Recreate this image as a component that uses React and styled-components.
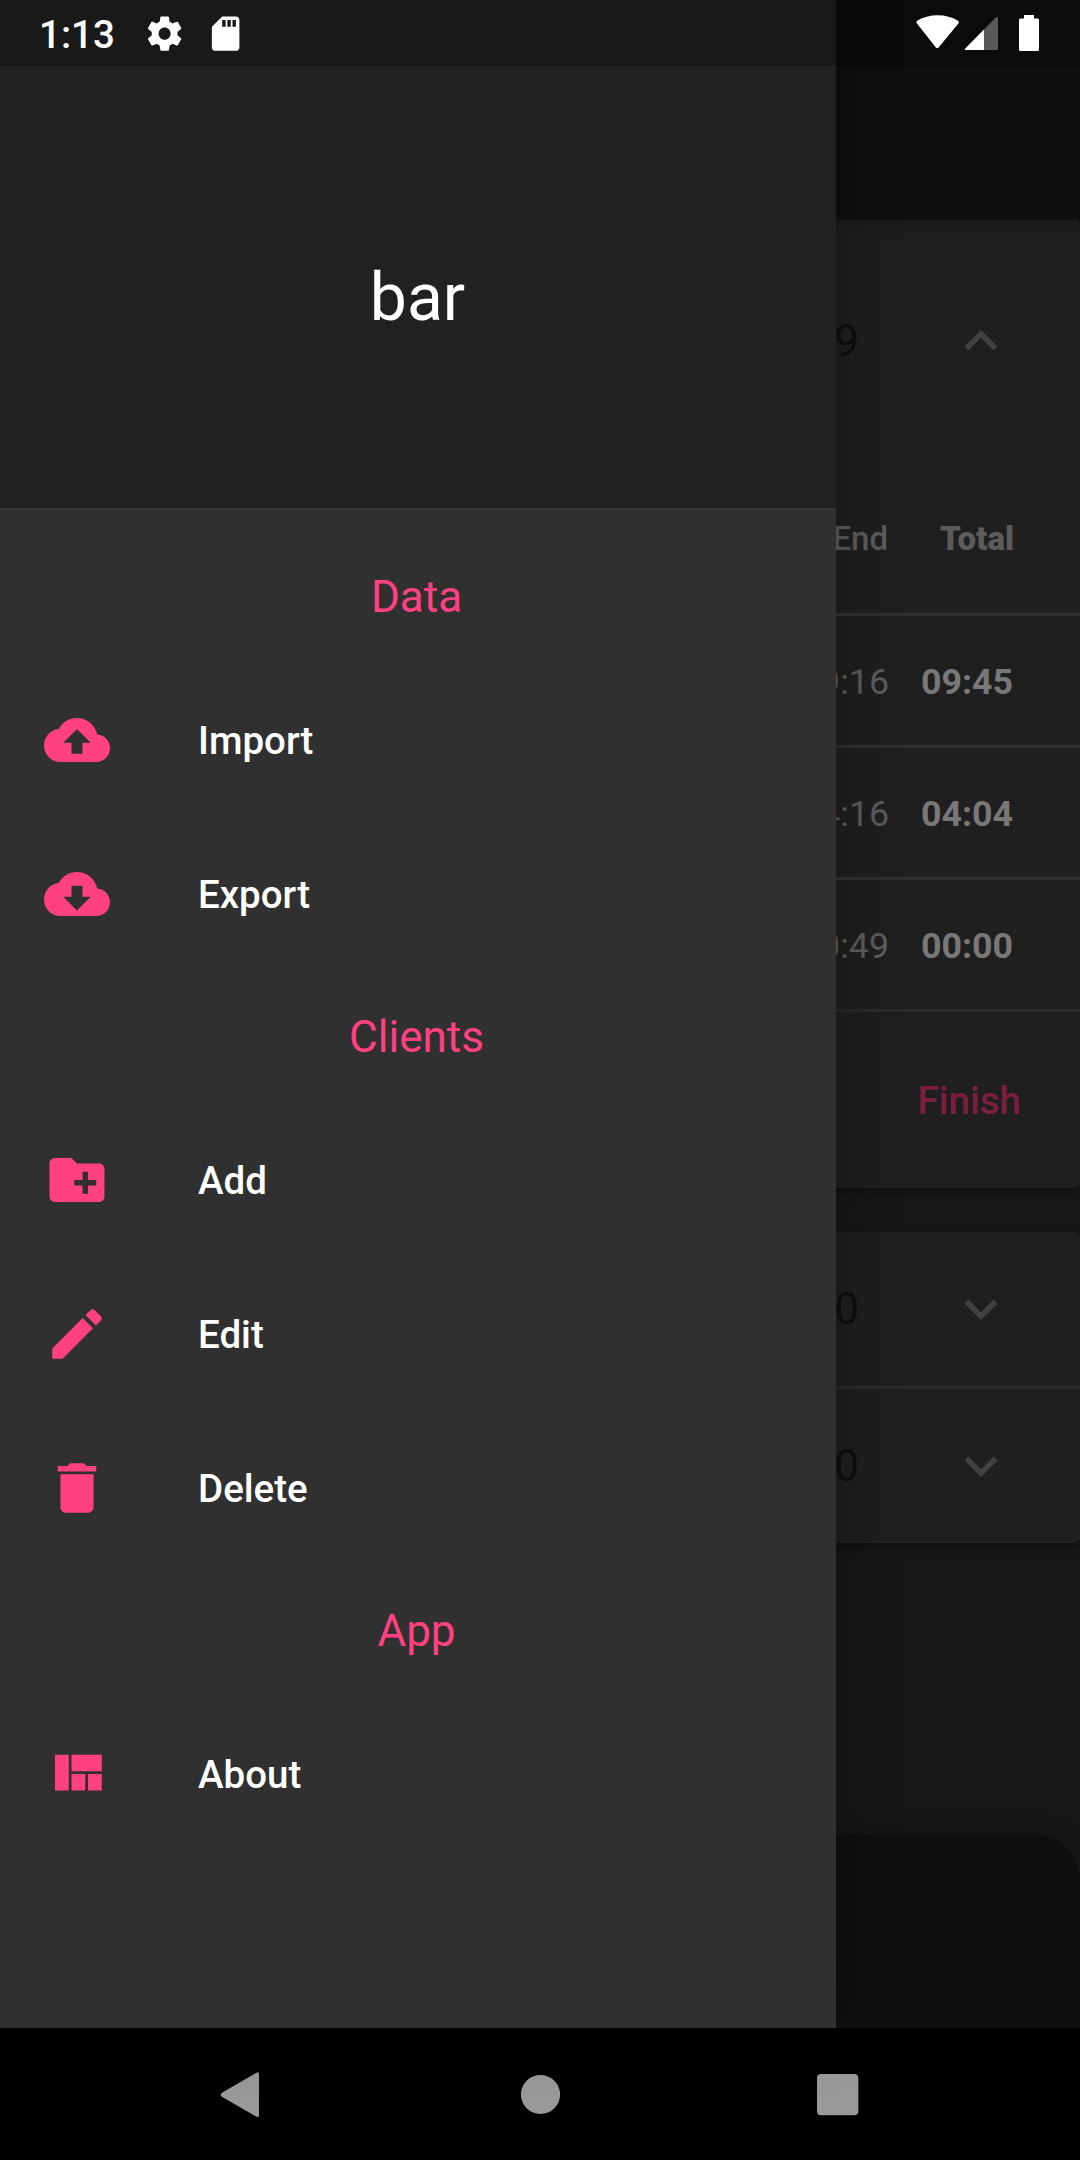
import React from 'react';
import styled, { createGlobalStyle } from 'styled-components';

const GlobalStyle = createGlobalStyle`
  * { box-sizing: border-box; }
  html, body { margin: 0; background: #000; }
  body { font-family: Roboto, "Noto Sans", sans-serif; }
`;

const Screen = styled.div`
  position: relative;
  width: 1080px;
  height: 2160px;
  display: flex;
  flex-direction: column;
  overflow: hidden;
  background: #000;
`;

const Page = styled.main`
  isolation: isolate;
  height: 2028px;
  display: flex;
  flex-direction: column;
  background: #171717;
  overflow: hidden;
`;

const AppBar = styled.header`
  flex: none;
  height: 220px;
  background: #0f0f0f;
  box-shadow: 0 2px 12px rgba(0, 0, 0, 0.2);
  z-index: 1;
`;

const Card = styled.section`
  flex: none;
  display: flex;
  flex-direction: column;
  margin-bottom: 44px;
  background: #1f1f1f;
  border-radius: 6px;
  box-shadow: 0 3px 9px rgba(0, 0, 0, 0.4);
`;

const PanelHeader = styled.div`
  display: flex;
  align-items: center;
  justify-content: flex-end;
  gap: 89px;
  box-sizing: content-box;
  height: ${(p) => (p.$open ? 242 : 154)}px;
  padding-right: 66px;
  border-bottom: ${(p) => (p.$divided ? '3px solid #2a2a2a' : '0')};
  color: #0e0e0e;
  font-size: 44px;
`;

const Row = styled.div`
  display: flex;
  align-items: center;
  justify-content: flex-end;
  height: ${(p) => (p.$head ? 154 : 132)}px;
  padding-top: 2px;
  padding-right: ${(p) => (p.$head ? 66 : 67)}px;
  border-bottom: 3px solid ${(p) => (p.$last ? '#2a2a2a' : '#303030')};
  color: #5c5c5c;
  font-size: ${(p) => (p.$head ? 33 : 35.75)}px;
  font-weight: ${(p) => (p.$head ? 500 : 400)};
`;

const TotalCell = styled.span`
  width: ${(p) => (p.$head ? 126 : 124)}px;
  text-align: right;
  font-weight: ${(p) => (p.$head ? 900 : 700)};
  color: ${(p) => (p.$head ? 'inherit' : '#787878')};
`;

const Actions = styled.div`
  display: flex;
  align-items: center;
  justify-content: flex-end;
  height: 176px;
  padding-right: 59px;
`;

const FinishButton = styled.button`
  border: 0;
  padding: 0;
  background: none;
  color: #7d1e3f;
  font: 500 38.5px Roboto, sans-serif;
`;

const BottomBar = styled.footer`
  flex: none;
  height: 193px;
  margin-top: auto;
  background: #0f0f0f;
  border-radius: 44px 44px 0 0;
  box-shadow: 0 -2px 22px rgba(0, 0, 0, 0.2);
`;

const Drawer = styled.aside`
  position: absolute;
  top: 0;
  left: 0;
  width: 836px;
  height: 2028px;
  display: flex;
  flex-direction: column;
  background: #303030;
  box-shadow: 0 0 60px rgba(0, 0, 0, 0.3);
`;

const DrawerHeader = styled.div`
  flex: none;
  display: flex;
  align-items: center;
  justify-content: center;
  height: 510px;
  margin-bottom: 21px;
  padding: 86px 1px 0 0;
  border-bottom: 2px solid #363636;
  background: #212121;
  color: #fff;
  font-size: 66px;
`;

const Subheader = styled.h2`
  flex: none;
  display: flex;
  align-items: center;
  justify-content: center;
  height: 132px;
  margin: 0;
  padding-right: 3px;
  color: #ff4081;
  font-size: 44px;
  font-weight: 400;
`;

const Tile = styled.div`
  flex: none;
  display: flex;
  align-items: center;
  gap: 88px;
  height: 154px;
  padding-left: 44px;
  color: #fff;
  font-size: 38.5px;
  font-weight: 500;
`;

const Glyph = styled.svg`
  flex: none;
  width: ${(p) => p.$size || 66}px;
  height: ${(p) => p.$size || 66}px;
  fill: ${(p) => p.$color || '#ff4081'};
`;

const StatusBar = styled.div`
  position: absolute;
  top: 0;
  left: 0;
  right: 0;
  display: flex;
  align-items: center;
  height: 66px;
  padding: 0 41px 0 39px;
  background: rgba(0, 0, 0, 0.22);
  color: #fff;
`;

const Clock = styled.time`
  width: 105px;
  padding-top: 2px;
  font-size: 38.5px;
  font-weight: 500;
`;

const Notifications = styled.div`
  display: flex;
  align-items: center;
  gap: 20px;
  padding-top: 1px;
`;

const SystemIcons = styled.svg`
  width: 124px;
  height: 38px;
  margin-left: auto;
`;

const NavBar = styled.nav`
  display: grid;
  grid-template-columns: repeat(3, 1fr);
  justify-items: center;
  align-items: center;
  height: 132px;
  padding: 0 93px;
`;

const NavIcon = styled.svg`
  width: 46px;
  height: 46px;
  fill: #999;
`;

const PATHS = {
  upload: 'M19.35 10.04C18.67 6.59 15.64 4 12 4 9.11 4 6.6 5.64 5.35 8.04 2.34 8.36 0 10.91 0 14c0 3.31 2.69 6 6 6h13c2.76 0 5-2.24 5-5 0-2.64-2.05-4.78-4.65-4.96zM14 13v4h-4v-4H7l5-5 5 5h-3z',
  download: 'M19.35 10.04C18.67 6.59 15.64 4 12 4 9.11 4 6.6 5.64 5.35 8.04 2.34 8.36 0 10.91 0 14c0 3.31 2.69 6 6 6h13c2.76 0 5-2.24 5-5 0-2.64-2.05-4.78-4.65-4.96zM17 13l-5 5-5-5h3V9h4v4h3z',
  folder: 'M20 6h-8l-2-2H4c-1.11 0-1.99.89-1.99 2L2 18c0 1.11.89 2 2 2h16c1.11 0 2-.89 2-2V8c0-1.11-.89-2-2-2zm-1 8h-3v3h-2v-3h-3v-2h3V9h2v3h3v2z',
  edit: 'M3 17.25V21h3.75L17.81 9.94l-3.75-3.75L3 17.25zM20.71 7.04c.39-.39.39-1.02 0-1.41l-2.34-2.34c-.39-.39-1.02-.39-1.41 0l-1.83 1.83 3.75 3.75 1.83-1.83z',
  trash: 'M6 19c0 1.1.9 2 2 2h8c1.1 0 2-.9 2-2V7H6v12zM19 4h-3.5l-1-1h-5l-1 1H5v2h14V4z',
  quilt: 'M10 18h5v-6h-5v6zm-6 0h5V5H4v13zm12 0h5v-6h-5v6zM10 5v6h11V5H10z',
  more: 'M16.59 8.59L12 13.17 7.41 8.59 6 10l6 6 6-6z',
  less: 'M12 8l-6 6 1.41 1.41L12 10.83l4.59 4.58L18 14z',
  gear: 'M19.43 12.98c.04-.32.07-.64.07-.98s-.03-.66-.07-.98l2.11-1.65c.19-.15.24-.42.12-.64l-2-3.46c-.12-.22-.39-.3-.61-.22l-2.49 1c-.52-.4-1.08-.73-1.69-.98l-.38-2.65C14.46 2.18 14.25 2 14 2h-4c-.25 0-.46.18-.49.42l-.38 2.65c-.61.25-1.17.59-1.69.98l-2.49-1c-.23-.09-.49 0-.61.22l-2 3.46c-.13.22-.07.49.12.64l2.11 1.65c-.04.32-.07.65-.07.98s.03.66.07.98l-2.11 1.65c-.19.15-.24.42-.12.64l2 3.46c.12.22.39.3.61.22l2.49-1c.52.4 1.08.73 1.69.98l.38 2.65c.03.24.24.42.49.42h4c.25 0 .46-.18.49-.42l.38-2.65c.61-.25 1.17-.59 1.69-.98l2.49 1c.23.09.49 0 .61-.22l2-3.46c.12-.22.07-.49-.12-.64l-2.11-1.65zM12 15.5c-1.93 0-3.5-1.57-3.5-3.5s1.57-3.5 3.5-3.5 3.5 1.57 3.5 3.5-1.57 3.5-3.5 3.5z',
  sd: 'M18 2h-8L4.02 8 4 20c0 1.1.9 2 2 2h12c1.1 0 2-.9 2-2V4c0-1.1-.9-2-2-2zm-6 6h-2V4h2v4zm3 0h-2V4h2v4zm3 0h-2V4h2v4z',
};

const Icon = ({ name, size, color }) => (
  <Glyph viewBox="0 0 24 24" $size={size} $color={color}>
    <path d={PATHS[name]} />
  </Glyph>
);

const SHIFTS = [
  { end: '9:16', total: '09:45' },
  { end: '4:16', total: '04:04' },
  { end: '0:49', total: '00:00' },
];

const SECTIONS = [
  { title: 'Data', items: [['upload', 'Import'], ['download', 'Export']] },
  { title: 'Clients', items: [['folder', 'Add'], ['edit', 'Edit'], ['trash', 'Delete']] },
  { title: 'App', items: [['quilt', 'About']] },
];

export default function App() {
  return (
    <Screen>
      <GlobalStyle />
      <Page>
        <AppBar />
        <Card>
          <PanelHeader $open>
            <span>9</span>
            <Icon name="less" color="#414141" />
          </PanelHeader>
          <Row $head>
            <span>End</span>
            <TotalCell $head>Total</TotalCell>
          </Row>
          {SHIFTS.map((s, i) => (
            <Row key={s.total} $last={i === SHIFTS.length - 1}>
              <span>{s.end}</span>
              <TotalCell>{s.total}</TotalCell>
            </Row>
          ))}
          <Actions>
            <FinishButton>Finish</FinishButton>
          </Actions>
        </Card>
        <Card>
          <PanelHeader $divided>
            <span>0</span>
            <Icon name="more" color="#414141" />
          </PanelHeader>
          <PanelHeader>
            <span>0</span>
            <Icon name="more" color="#414141" />
          </PanelHeader>
        </Card>
        <BottomBar />
      </Page>

      <NavBar>
        <NavIcon viewBox="0 0 46 46">
          <path d="M37.3 1.8Q40 .4 40 3.5V43.9Q40 47 37.3 45.6L2.9 25.7Q.4 23.7 2.9 21.7Z" />
        </NavIcon>
        <NavIcon viewBox="0 0 46 46">
          <circle cx="23.5" cy="23.5" r="19.6" />
        </NavIcon>
        <NavIcon viewBox="0 0 46 46">
          <rect x="2" y="3" width="41.3" height="41.3" rx="4" />
        </NavIcon>
      </NavBar>

      <Drawer>
        <DrawerHeader>bar</DrawerHeader>
        {SECTIONS.map((section) => (
          <React.Fragment key={section.title}>
            <Subheader>{section.title}</Subheader>
            {section.items.map(([icon, label]) => (
              <Tile key={label}>
                <Icon name={icon} />
                <span>{label}</span>
              </Tile>
            ))}
          </React.Fragment>
        ))}
      </Drawer>

      <StatusBar>
        <Clock>1:13</Clock>
        <Notifications>
          <Icon name="gear" size={41.25} color="#fff" />
          <Icon name="sd" size={41.25} color="#fff" />
        </Notifications>
        <SystemIcons viewBox="0 0 124 38" fill="#fff">
          <path d="M1.8 9.2Q.6 8 2.2 6.8Q11 1.3 22.6 1.3T43 6.8Q44.5 8 43.4 9.4L23.8 33.2Q22.2 35 20.7 33.2Z" />
          <path d="M82.3 3Q83 2.7 83 4V35Q83 36 82 36H51Q49 36 50.3 34.4L80.6 3.8Q81.6 2.8 82.3 3Z" fill="#585858" />
          <path d="M69 15.5V36H51Q49 36 50.3 34.4Z" />
          <path d="M109 1H119V4.5H122.5Q124 4.5 124 6V35.5Q124 37 122.5 37H105.5Q104 37 104 35.5V6Q104 4.5 105.5 4.5H109Z" />
        </SystemIcons>
      </StatusBar>
    </Screen>
  );
}
